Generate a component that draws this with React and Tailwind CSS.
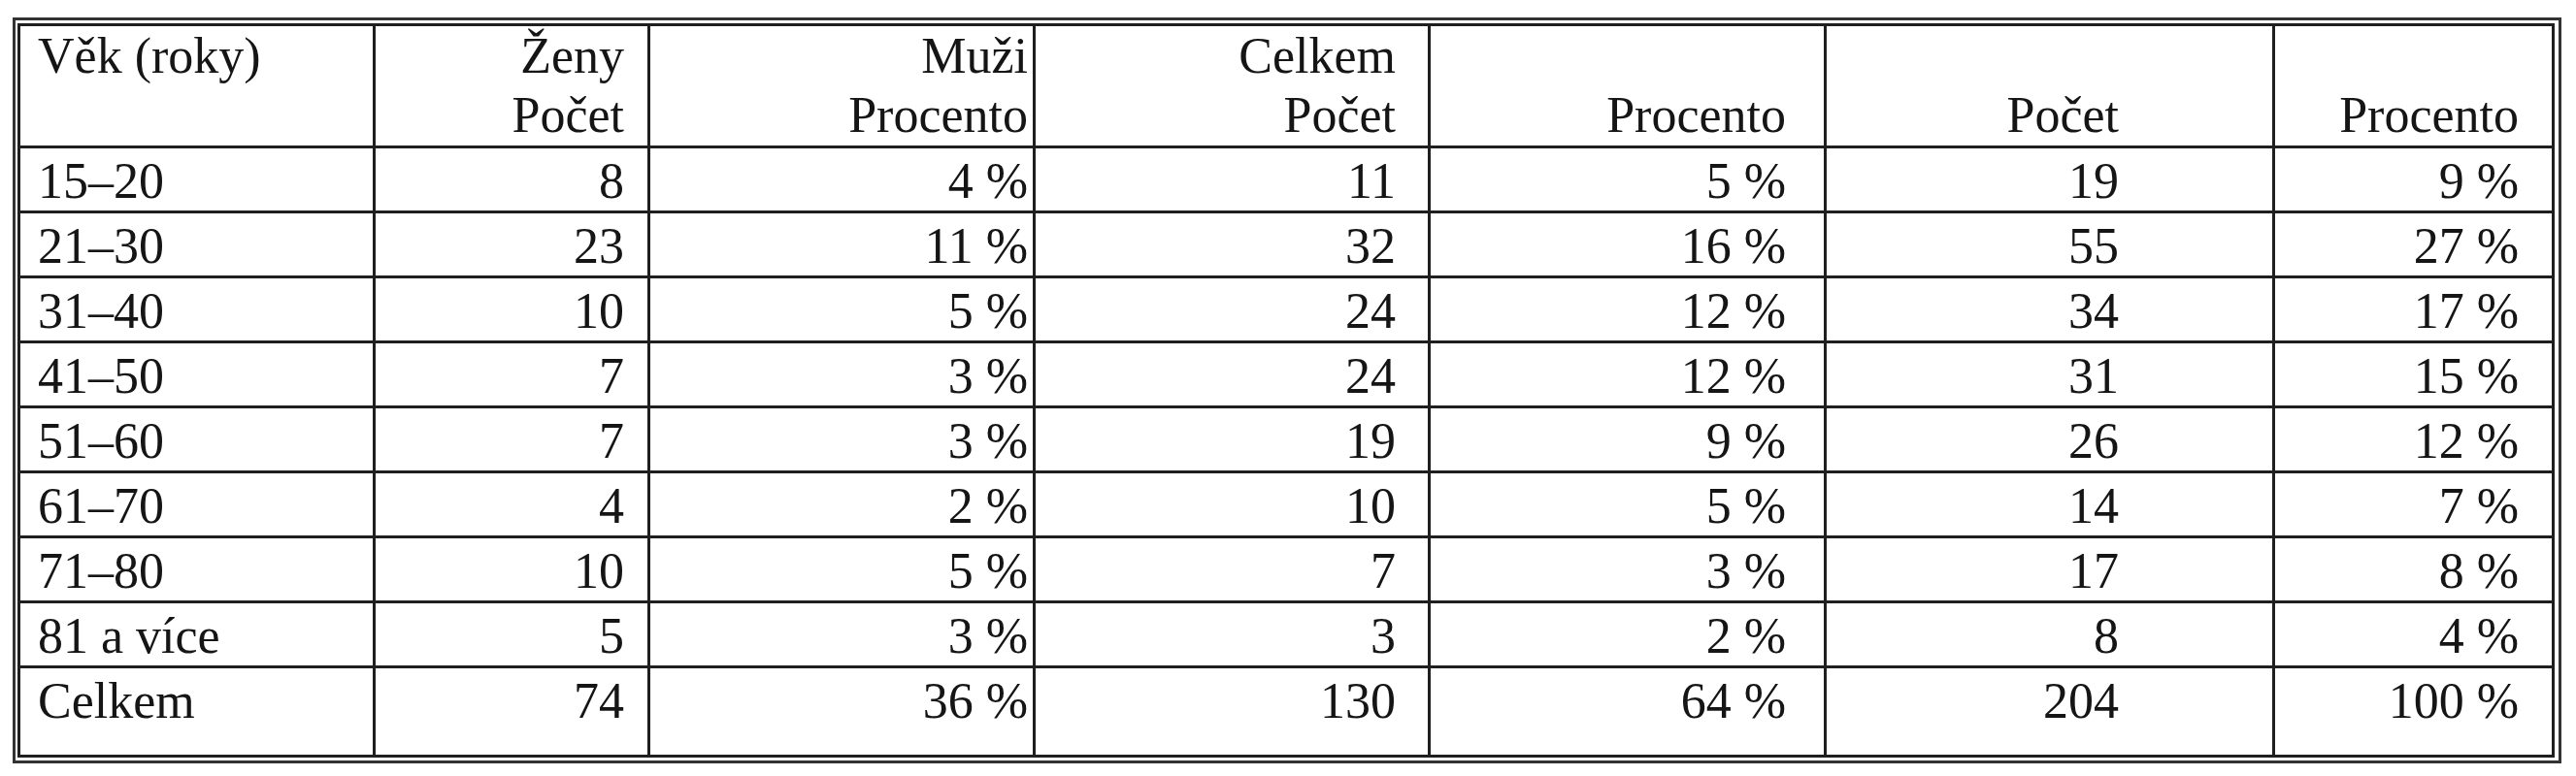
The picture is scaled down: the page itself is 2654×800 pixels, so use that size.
import React from "react";

const rows = [
  ["15–20", "8", "4 %", "11", "5 %", "19", "9 %"],
  ["21–30", "23", "11 %", "32", "16 %", "55", "27 %"],
  ["31–40", "10", "5 %", "24", "12 %", "34", "17 %"],
  ["41–50", "7", "3 %", "24", "12 %", "31", "15 %"],
  ["51–60", "7", "3 %", "19", "9 %", "26", "12 %"],
  ["61–70", "4", "2 %", "10", "5 %", "14", "7 %"],
  ["71–80", "10", "5 %", "7", "3 %", "17", "8 %"],
  ["81 a více", "5", "3 %", "3", "2 %", "8", "4 %"],
  ["Celkem", "74", "36 %", "130", "64 %", "204", "100 %"],
];

const pads = ["pl-[18px]", "pr-[24px]", "pr-[5px]", "pr-[33px]", "pr-[39px]", "pr-[158px]", "pr-[34px]"];

export default function App() {
  return (
    <div className="bg-white min-h-[800px] pt-[18px] pl-[13px] font-['Liberation_Serif',serif] text-[52px] leading-[61px] text-[#151515]">
      <div className="w-[2626px] border-[3px] border-[#333333] pt-[3px] pb-[3px] pl-[2px] pr-[4px]">
        <div className="border-[3px] border-[#1f1f1f] bg-[#1f1f1f] grid grid-cols-[363px_280px_394px_404px_405px_459px_285px] grid-rows-[123px_repeat(8,64px)_89px] gap-[3px]">
          <div className={"bg-white text-left " + pads[0]}>Věk (roky)</div>
          <div className={"bg-white text-right " + pads[1]}>
            <div>Ženy</div>
            <div>Počet</div>
          </div>
          <div className={"bg-white text-right " + pads[2]}>
            <div>Muži</div>
            <div>Procento</div>
          </div>
          <div className={"bg-white text-right " + pads[3]}>
            <div>Celkem</div>
            <div>Počet</div>
          </div>
          <div className={"bg-white text-right " + pads[4]}>
            <div>&nbsp;</div>
            <div>Procento</div>
          </div>
          <div className={"bg-white text-right " + pads[5]}>
            <div>&nbsp;</div>
            <div>Počet</div>
          </div>
          <div className={"bg-white text-right " + pads[6]}>
            <div>&nbsp;</div>
            <div>Procento</div>
          </div>
          {rows.map((r, i) =>
            r.map((c, j) => (
              <div
                key={i + "-" + j}
                className={"bg-white pt-[3px] whitespace-nowrap " + (j === 0 ? "text-left " : "text-right ") + pads[j]}
              >
                {c}
              </div>
            ))
          )}
        </div>
      </div>
    </div>
  );
}
